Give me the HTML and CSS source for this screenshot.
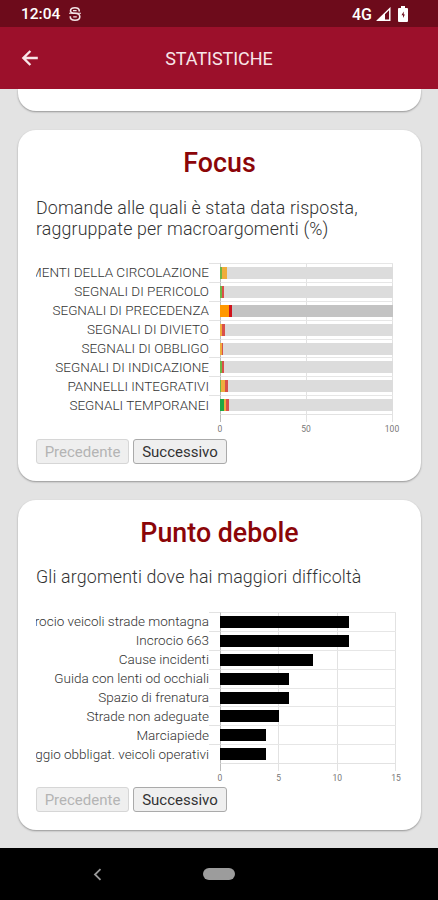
FILE: index.html
```html
<!DOCTYPE html>
<html lang="it">
<head>
    <meta charset="UTF-8">
    <meta name="viewport" content="width=device-width, initial-scale=1.0">
    <title>Statistiche</title>
    <link rel="stylesheet" href="styles.css">
</head>
<body>
    <div class="status-bar">
        <span class="clock">12:04</span>
        <svg class="status-logo" width="14" height="16" viewBox="0 0 14 16" fill="none" stroke="#f3e4e6" stroke-width="1.6">
            <path d="M11.200 5.500V4.600C11.200 2.800 9.600 1.800 7 1.800S2.500 2.800 2.500 4.700 4 7.300 7 7.300s4.800 1.500 4.800 3.500-1.900 3.400-4.800 3.400-4.700-1.200-4.700-3.200v-.8"/>
            <path d="M1 7.300h12M5 4.600h3.600M5.200 10.900h3.600" stroke-width="1.1"/>
        </svg>
        <span class="network">4G</span>
        <svg class="signal" width="15" height="15" viewBox="0 0 15 15">
            <path d="M1.800 13.300L13.800 1.600v11.700z" fill="none" stroke="#fff" stroke-width="1.4"/>
            <path d="M1 13.500L9 5.800v7.700z" fill="#fff"/>
        </svg>
        <svg class="battery" width="10" height="16" viewBox="0 0 10 16">
            <path d="M3 0h4v2h2q1 0 1 1v12q0 1-1 1H1q-1 0-1-1V3q0-1 1-1h2z" fill="#fff"/>
            <path d="M5.700 5.500L3.500 9.300h1.500V12L6.900 8.500H5.700z" fill="#6d0b1b"/>
        </svg>
    </div>
    <div class="app-bar">
        <svg class="back" width="18" height="18" viewBox="0 0 18 18" fill="none" stroke="#f8e6e8" stroke-width="2.4">
            <path d="M16.800 9H2.500M9.400 2L2.400 9l7 7"/>
        </svg>
        <h1>STATISTICHE</h1>
    </div>

    <div class="content">
        <div class="card card-top"></div>

        <div class="card card-focus">
            <h2>Focus</h2>
            <p class="text-focus">Domande alle quali è stata data risposta,<br>raggruppate per macroargomenti (%)</p>
            <div class="chart chart-focus" id="focus"></div>
            <div class="buttons">
                <button class="prev" disabled>Precedente</button>
                <button class="next">Successivo</button>
            </div>
        </div>

        <div class="card card-weak">
            <h2>Punto debole</h2>
            <p class="text-weak">Gli argomenti dove hai maggiori difficoltà</p>
            <div class="chart chart-weak" id="weak"></div>
            <div class="buttons">
                <button class="prev" disabled>Precedente</button>
                <button class="next">Successivo</button>
            </div>
        </div>
    </div>

    <div class="nav-bar">
        <svg class="nav-back" width="9" height="13" viewBox="0 0 9 13" fill="none" stroke="#999" stroke-width="1.8">
            <path d="M7.500 1.200L2 6.500l5.500 5.300"/>
        </svg>
        <span class="nav-home"></span>
    </div>

    <script>
        // values are [green, orange, red], in percent
        const focus = [
            { label: "ELEMENTI DELLA CIRCOLAZIONE", values: [0.9, 3.1, 0] },
            { label: "SEGNALI DI PERICOLO", values: [0.9, 0, 1.2] },
            { label: "SEGNALI DI PRECEDENZA", values: [0, 5, 1.8], active: true },
            { label: "SEGNALI DI DIVIETO", values: [0, 1.1, 1.6] },
            { label: "SEGNALI DI OBBLIGO", values: [0, 0.9, 0.5] },
            { label: "SEGNALI DI INDICAZIONE", values: [0.9, 0, 1.2] },
            { label: "PANNELLI INTEGRATIVI", values: [0.8, 2.1, 1.7] },
            { label: "SEGNALI TEMPORANEI", values: [2.4, 1.3, 1.6] }
        ];

        const weak = [
            { label: "Incrocio veicoli strade montagna", values: [11] },
            { label: "Incrocio 663", values: [11] },
            { label: "Cause incidenti", values: [7.9] },
            { label: "Guida con lenti od occhiali", values: [5.9] },
            { label: "Spazio di frenatura", values: [5.9] },
            { label: "Strade non adeguate", values: [5] },
            { label: "Marciapiede", values: [3.9] },
            { label: "Parcheggio obbligat. veicoli operativi", values: [3.9] }
        ];

        function drawChart(id, rows, ticks) {
            const max = ticks[ticks.length - 1];
            const lines = ticks.slice(1).map(() => '<i></i>').join('');
            let html = '';
            rows.forEach(row => {
                const parts = row.values.map((v, i) =>
                    `<span class="part part-${i}" style="width: ${v / max * 100}%"></span>`).join('');
                html += `<div class="row">
                    <div class="label"><span>${row.label}</span></div>
                    <div class="tick"></div>
                    <div class="plot">
                        <div class="lines">${lines}</div>
                        <div class="bar${row.active ? ' active' : ''}">${parts}</div>
                    </div>
                </div>`;
            });
            html += `<div class="axis"><div class="lines">${lines}</div></div>`;
            html += `<div class="scale">${ticks.map(t => `<span>${t}</span>`).join('')}</div>`;
            document.getElementById(id).innerHTML = html;
        }

        drawChart('focus', focus, [0, 50, 100]);
        drawChart('weak', weak, [0, 5, 10, 15]);
    </script>
</body>
</html>
```
FILE: styles.css
```css
* {
    box-sizing: border-box;
}

body {
    margin: 0;
    width: 438px;
    height: 900px;
    overflow: hidden;
    display: flex;
    flex-direction: column;
    font-family: Roboto, "Liberation Sans", sans-serif;
    background-color: #e3e3e3;
}

.status-bar {
    height: 27px;
    flex: none;
    background-color: #6d0b1b;
    color: #fff;
    display: flex;
    align-items: center;
    padding: 1px 30px 0 21px;
    font-weight: 500;
    font-size: 15.5px;
}

.status-logo {
    margin-left: 8px;
}

.network {
    margin-left: auto;
    font-size: 16px;
}

.signal {
    margin-left: 4px;
}

.battery {
    margin-left: 7px;
}

.app-bar {
    height: 62px;
    flex: none;
    background-color: #9c102b;
    display: grid;
    grid-template-columns: 21px 1fr 21px;
    align-items: center;
}

.back {
    margin-left: 21px;
}

.app-bar h1 {
    margin: 0;
    text-align: center;
    color: #f8e6e8;
    font-size: 18px;
    font-weight: 400;
    letter-spacing: -0.05px;
}

.content {
    flex: 1;
    padding: 0 17px 0 18px;
    overflow: hidden;
}

.card {
    background-color: #fff;
    border-radius: 18px;
    box-shadow: 0 1px 2px rgba(0, 0, 0, 0.35);
    padding: 0 18px;
    margin-bottom: 19px;
}

.card-top {
    height: 22px;
    margin-bottom: 19px;
    border-radius: 0 0 18px 18px;
}

.card-focus {
    height: 351px;
}

.card-weak {
    height: 330px;
}

.card h2 {
    margin: 0;
    padding-top: 17px;
    line-height: 32px;
    font-size: 26.8px;
    font-weight: 500;
    color: #8b0508;
    text-align: center;
}

.card p {
    margin: 18px 0 0;
    font-size: 17.8px;
    font-weight: 300;
    letter-spacing: 0.15px;
    line-height: 21px;
    color: #333;
    white-space: nowrap;
}

.card .text-weak {
    margin-top: 17px;
}

.chart {
    margin-top: 24px;
    height: 176px;
}

.chart-weak {
    margin-top: 25px;
    height: 175px;
}

.row {
    display: grid;
    grid-template-columns: 173px 11px auto;
    height: 18.9px;
}

.label {
    display: flex;
    justify-content: flex-end;
    align-items: center;
    overflow: hidden;
    white-space: nowrap;
    font-size: 13.5px;
    font-weight: 300;
    color: #333;
}

.tick {
    border-top: 1px solid #e2e2e2;
}

.plot {
    display: grid;
    align-items: center;
    border-top: 1px solid #e6e6e6;
    border-left: 1px solid #bbb;
}

.chart-focus .plot,
.chart-focus .axis {
    width: 173px;
}

.chart-weak .plot,
.chart-weak .axis {
    width: 176px;
}

.lines {
    grid-area: 1 / 1;
    align-self: stretch;
    display: flex;
}

.lines i {
    flex: 1;
    border-right: 1px solid #e2e2e2;
}

/* bars start on top of the zero line */
.bar {
    grid-area: 1 / 1;
    height: 12px;
    margin-left: -1px;
    display: flex;
}

.chart-focus .bar {
    background-color: #dcdcdc;
}

.chart-focus .bar.active {
    background-color: #c3c3c3;
}

.part-0 {
    background-color: #6fb544;
}

.part-1 {
    background-color: #efac3c;
}

.part-2 {
    background-color: #d9504a;
}

.active .part-1 {
    background-color: #ff9800;
}

.active .part-2 {
    background-color: #d0131c;
}

.chart-focus .row:nth-child(8) .part-0 {
    background-color: #1fa845;
}

.chart-weak .part-0 {
    background-color: #000;
}

.axis {
    margin-left: 184px;
    height: 8px;
    display: grid;
    border-top: 1px solid #e2e2e2;
    border-left: 1px solid #bbb;
}

.scale {
    margin: 2px 0 0 173px;
    display: flex;
    justify-content: space-between;
    font-size: 8.5px;
    line-height: 11px;
    color: #777;
}

.scale span {
    width: 22px;
    text-align: center;
}

.chart-focus .scale {
    width: 194px;
}

.chart-weak .scale {
    width: 198px;
}

.buttons {
    display: flex;
    gap: 4px;
}

.buttons button {
    height: 25px;
    padding: 0;
    font-family: inherit;
    font-size: 15px;
    border: 1px solid #aaa;
    border-radius: 3px;
    background-color: #efefef;
    color: #333;
}

.buttons .prev {
    width: 93px;
    border-color: #d6d6d6;
    color: #b4b4b4;
}

.buttons .next {
    width: 94px;
}

.nav-bar {
    height: 52px;
    flex: none;
    background-color: #000;
    display: grid;
    grid-template-columns: 1fr 32px 1fr;
    align-items: center;
}

.nav-back {
    margin-left: 93px;
}

.nav-home {
    height: 12px;
    border-radius: 6px;
    background-color: #9c9c9c;
}
```
